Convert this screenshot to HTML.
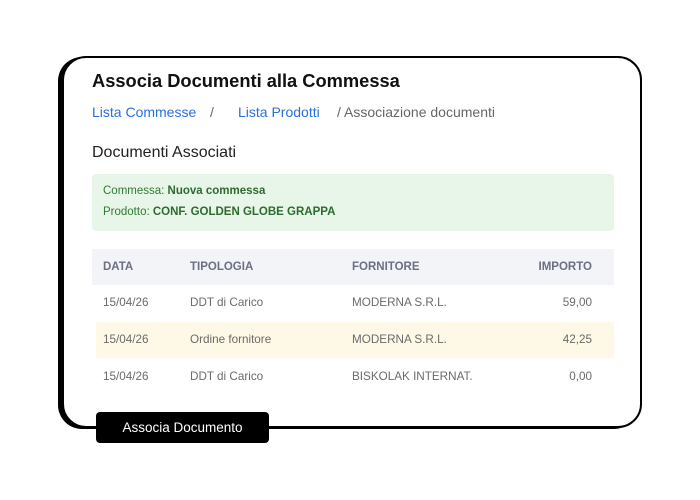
<!DOCTYPE html>
<html><head><meta charset="utf-8"><style>
body{margin:0;width:700px;height:500px;background:#fff;font-family:"Liberation Sans",sans-serif;position:relative;overflow:hidden}
.card{position:absolute;left:62px;top:56px;width:576px;height:368px;border:2px solid #000;border-radius:24px;box-shadow:-4px 1px 0 #000;background:#fff}
.t{position:absolute;white-space:nowrap}
.h{left:92px;top:70px;font-size:18.3px;font-weight:bold;color:#111}
.bc{top:104px;font-size:14px}
.green{position:absolute;left:92px;top:174px;width:522px;height:57px;background:#e8f5e9;border-radius:4px}
.g{font-size:11.5px;color:#2e7d32;left:103px}
.g b{color:#2e6b2e}
.th{position:absolute;left:92px;top:249px;width:522px;height:36px;background:#f3f4f8}
.hl{position:absolute;left:96px;top:322px;width:518px;height:36px;background:#fef8e6}
.c{font-size:11.7px;color:#6b6b6b}
.hd{font-size:11.5px;font-weight:bold;color:#6b7080}
.btn{position:absolute;left:96px;top:412px;width:173px;height:31px;background:#000;border-radius:4px;color:#fff;font-size:13.5px;text-align:center;line-height:31px}
</style></head><body>
<div class="card"></div>
<div class="t h">Associa Documenti alla Commessa</div>
<div class="t bc" style="left:92px;color:#2b6fe0">Lista Commesse</div>
<div class="t bc" style="left:210px;color:#666">/</div>
<div class="t bc" style="left:238px;color:#2b6fe0">Lista Prodotti</div>
<div class="t bc" style="left:337px;color:#666">/ Associazione documenti</div>
<div class="t" style="left:92px;top:144px;font-size:16px;color:#222">Documenti Associati</div>
<div class="green"></div>
<div class="t g" style="top:185px">Commessa: <b>Nuova commessa</b></div>
<div class="t g" style="top:206px">Prodotto: <b>CONF. GOLDEN GLOBE GRAPPA</b></div>
<div class="th"></div>
<div class="hl"></div>
<div class="t hd" style="left:103px;top:261px">DATA</div>
<div class="t hd" style="left:190px;top:261px">TIPOLOGIA</div>
<div class="t hd" style="left:352px;top:261px">FORNITORE</div>
<div class="t hd" style="right:108px;top:261px">IMPORTO</div>
<div class="t c" style="left:103px;top:296px">15/04/26</div>
<div class="t c" style="left:190px;top:296px">DDT di Carico</div>
<div class="t c" style="left:352px;top:296px">MODERNA S.R.L.</div>
<div class="t c" style="right:108px;top:296px">59,00</div>
<div class="t c" style="left:103px;top:333px">15/04/26</div>
<div class="t c" style="left:190px;top:333px">Ordine fornitore</div>
<div class="t c" style="left:352px;top:333px">MODERNA S.R.L.</div>
<div class="t c" style="right:108px;top:333px">42,25</div>
<div class="t c" style="left:103px;top:370px">15/04/26</div>
<div class="t c" style="left:190px;top:370px">DDT di Carico</div>
<div class="t c" style="left:352px;top:370px">BISKOLAK INTERNAT.</div>
<div class="t c" style="right:108px;top:370px">0,00</div>
<div class="btn">Associa Documento</div>
</body></html>
